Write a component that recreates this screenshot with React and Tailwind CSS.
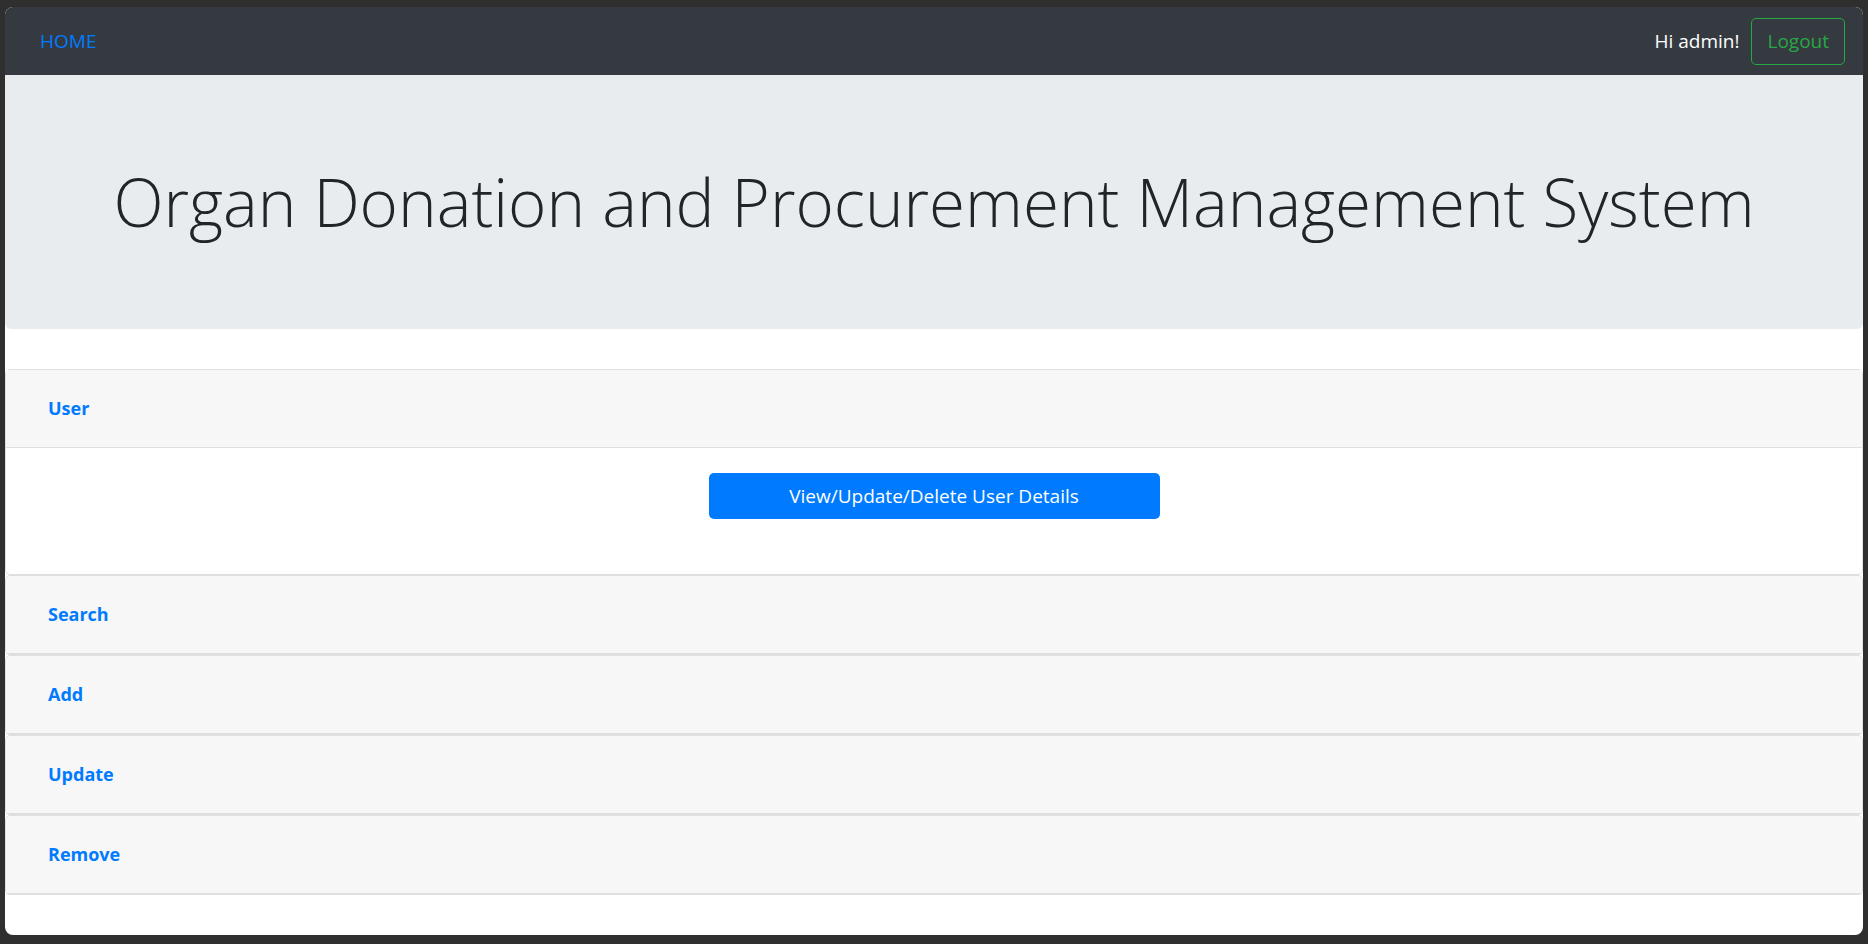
// Admin 홈 화면 - 상단 네비, 제목 영역, 아코디언 카드 목록

const sections = ["Search", "Add", "Update", "Remove"];

export default function App() {
  return (
    <div
      className="h-screen bg-[#2f2f2f] px-[5px] pt-[7px] pb-[9px]"
      style={{ fontFamily: '"Open Sans", "Noto Sans", sans-serif' }}
    >
      <div className="h-full bg-white rounded-[8px] overflow-hidden flex flex-col">
        {/* 상단 네비게이션 바 */}
        <nav className="h-[68px] shrink-0 bg-[#343a40] flex items-center justify-between pl-[35px] pr-[18px]">
          <a className="text-[19px] text-[#007bff] cursor-pointer">HOME</a>
          <div className="flex items-center gap-[12px]">
            <span className="text-[19px] text-white">Hi admin!</span>
            <button className="h-[47px] px-[15px] text-[19px] text-[#28a745] border border-[#28a745] rounded-[5px]">
              Logout
            </button>
          </div>
        </nav>

        {/* 제목 영역 */}
        <div className="h-[254px] shrink-0 bg-[#e9ecef] rounded-b-[6px] flex items-center justify-center">
          <h1 className="text-[65.5px] font-light text-[#212529] leading-none">
            Organ Donation and Procurement Management System
          </h1>
        </div>

        {/* 아코디언 카드 */}
        <div className="mt-[40px]">
          <div className="border border-[#dfdfdf] rounded-[5px]">
            <div className="h-[78px] bg-[#f7f7f7] border-b border-[#dfdfdf] flex items-center pl-[42px]">
              <span className="text-[18px] font-bold text-[#007bff]">User</span>
            </div>
            <div className="h-[126px] pt-[25px] flex justify-center">
              <button className="w-[451px] h-[46px] bg-[#007bff] text-white text-[19px] rounded-[5px]">
                View/Update/Delete User Details
              </button>
            </div>
          </div>
          {sections.map((s) => (
            <div key={s} className="border border-[#dfdfdf] rounded-[5px]">
              <div className="h-[78px] bg-[#f7f7f7] border-b border-[#dfdfdf] rounded-t-[5px] flex items-center pl-[42px]">
                <span className="text-[18px] font-bold text-[#007bff]">{s}</span>
              </div>
            </div>
          ))}
        </div>
      </div>
    </div>
  );
}
